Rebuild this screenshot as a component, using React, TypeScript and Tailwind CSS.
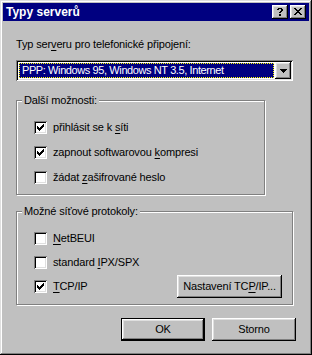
import React from "react";

const raised =
  "shadow-[inset_-1px_-1px_#000,inset_1px_1px_#fff,inset_-2px_-2px_#808080,inset_2px_2px_#dfdfdf]";
const sunken =
  "shadow-[inset_1px_1px_#808080,inset_-1px_-1px_#fff,inset_2px_2px_#000,inset_-2px_-2px_#dfdfdf]";

function Check({ checked }: { checked: boolean }) {
  const cols = [2, 3, 4, 3, 2, 1, 0];
  return (
    <div className={`relative w-[13px] h-[13px] shrink-0 bg-white ${sunken}`}>
      {checked && (
        <svg width="13" height="13" className="absolute left-0 top-0" shapeRendering="crispEdges">
          <path
            d={cols.map((s, c) => `M${3 + c},${3 + s}h1v3h-1z`).join("")}
            fill="#000"
          />
        </svg>
      )}
    </div>
  );
}

function Row({ checked, children }: { checked: boolean; children: React.ReactNode }) {
  return (
    <div className="flex items-center h-[13px]">
      <Check checked={checked} />
      <span className="ml-[6px] leading-[13px] whitespace-nowrap">{children}</span>
    </div>
  );
}

function U({ children }: { children: React.ReactNode }) {
  return <span className="underline underline-offset-[2px]">{children}</span>;
}

function Group({
  title,
  className,
  children,
}: {
  title: string;
  className: string;
  children: React.ReactNode;
}) {
  return (
    <div
      className={`relative border border-[#808080] shadow-[inset_1px_1px_#fff,1px_1px_#fff] ${className}`}
    >
      <span className="absolute left-[5px] top-[-7px] bg-[#c0c0c0] px-[2px] leading-[13px] whitespace-nowrap">
        {title}
      </span>
      {children}
    </div>
  );
}

export default function App() {
  return (
    <div className="w-[312px] h-[355px] bg-[#c0c0c0] p-[3px] text-[11px] tracking-[-0.15px] text-black font-['Liberation_Sans',Arial,sans-serif] shadow-[inset_-1px_-1px_#000,inset_1px_1px_#dfdfdf,inset_-2px_-2px_#808080,inset_2px_2px_#fff] flex flex-col">
      {/* title bar */}
      <div className="h-[18px] bg-[#000080] flex items-center pl-[3px] pr-[3px]">
        <span className="text-white font-bold text-[12px] leading-[18px] tracking-[0px]">Typy serverů</span>
        <div className="ml-auto flex gap-[2px]">
          <div className={`w-[16px] h-[14px] bg-[#c0c0c0] ${raised} flex items-center justify-center`}>
            <svg width="16" height="14" shapeRendering="crispEdges">
              <path
                d="M6,3h4v1h-4zM5,4h2v1h-2zM9,4h2v2h-2zM10,4h1v1h-1zM8,6h2v1h-2zM7,7h2v1h-2zM7,9h2v2h-2z"
                fill="#000"
              />
            </svg>
          </div>
          <div className={`w-[16px] h-[14px] bg-[#c0c0c0] ${raised} flex items-center justify-center`}>
            <svg width="16" height="14" shapeRendering="crispEdges">
              <path
                d="M4,3h2v1h-2zM10,3h2v1h-2zM5,4h2v1h-2zM9,4h2v1h-2zM6,5h4v1h-4zM7,6h2v1h-2zM6,7h4v1h-4zM5,8h2v1h-2zM9,8h2v1h-2zM4,9h2v1h-2zM10,9h2v1h-2z"
                fill="#000"
              />
            </svg>
          </div>
        </div>
      </div>

      {/* body */}
      <div className="flex flex-col px-[13px]">
        <div className="mt-[17px] leading-[13px] whitespace-nowrap">
          Typ ser<U>v</U>eru pro telefonické připojení:
        </div>

        <div className={`mt-[9px] w-[277px] h-[21px] bg-white ${sunken} flex p-[2px]`}>
          <div className="flex-1 m-[1px] bg-[#000080] outline outline-1 outline-dotted outline-[#ffff00] -outline-offset-1 flex items-center pl-[3px]">
            <span className="text-white leading-[13px] whitespace-nowrap tracking-[-0.4px]">
              PPP: Windows 95, Windows NT 3.5, Internet
            </span>
          </div>
          <div className={`w-[16px] h-[17px] bg-[#c0c0c0] ${raised} flex items-center justify-center`}>
            <svg width="7" height="4" shapeRendering="crispEdges">
              <path d="M0,0h7v1h-7zM1,1h5v1h-5zM2,2h3v1h-3zM3,3h1v1h-1z" fill="#000" />
            </svg>
          </div>
        </div>

        <Group title="Další možnosti:" className="mt-[19px] w-[249px] h-[95px] pt-[20px] pl-[17px] flex flex-col gap-[12px]">
          <Row checked>
            přihlásit se k <U>s</U>íti
          </Row>
          <Row checked>
            zapnout softwarovou <U>k</U>ompresi
          </Row>
          <Row checked={false}>
            žádat <U>z</U>ašifrované heslo
          </Row>
        </Group>

        <Group title="Možné síťové protokoly:" className="mt-[16px] w-[277px] h-[94px] pt-[20px] pl-[17px] pr-[10px] flex flex-col">
          <Row checked={false}>
            <U>N</U>etBEUI
          </Row>
          <div className="mt-[11px]">
            <Row checked={false}>
              standard <U>I</U>PX/SPX
            </Row>
          </div>
          <div className="mt-[6px] h-[23px] flex items-center">
            <Row checked>
              <U>T</U>CP/IP
            </Row>
            <div className={`ml-auto w-[105px] h-[23px] bg-[#c0c0c0] ${raised} flex items-center justify-center leading-[13px] whitespace-nowrap`}>
              Nastavení TC<U>P</U>/IP...
            </div>
          </div>
        </Group>

        <div className="mt-[13px] flex justify-end gap-[7px]">
          <div className="w-[84px] h-[23px] border border-black">
            <div className={`w-full h-full ${raised} flex items-center justify-center leading-[13px]`}>OK</div>
          </div>
          <div className={`w-[84px] h-[23px] ${raised} flex items-center justify-center leading-[13px]`}>
            Storno
          </div>
        </div>
      </div>
    </div>
  );
}
